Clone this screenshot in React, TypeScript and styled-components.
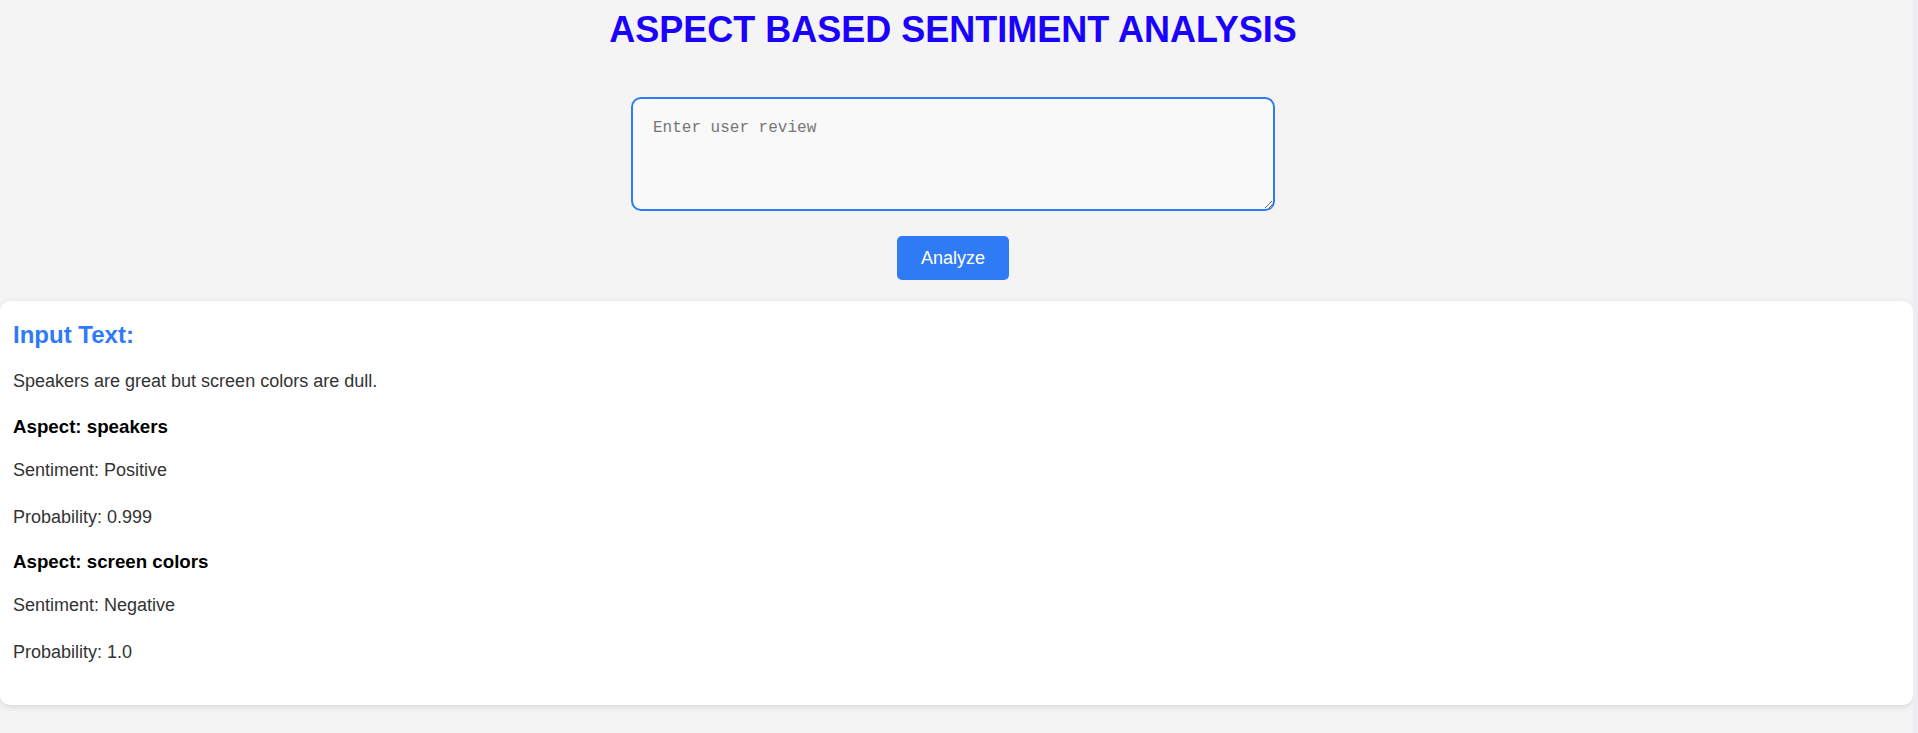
import React from "react";
import styled, { createGlobalStyle } from "styled-components";

const GlobalStyle = createGlobalStyle`
  html, body {
    margin: 0;
    padding: 0;
  }
  body {
    background: #f4f4f4;
    font-family: "Liberation Sans", Arial, Helvetica, sans-serif;
    line-height: 1.6;
    color: #333333;
  }
`;

const Page = styled.div`
  display: grid;
  grid-template-columns: 1fr 5px;
  min-height: 100vh;
`;

const Main = styled.main`
  display: flex;
  flex-direction: column;
  padding-top: 1px;
`;

const ScrollTrack = styled.div`
  background: #ececf3;
`;

const Header = styled.header`
  display: flex;
  flex-direction: column;
  align-items: center;
  padding-right: 7px;
`;

const Title = styled.h1`
  margin: 0;
  font-size: 36px;
  font-weight: 700;
  line-height: 1.6;
  color: #1a00ff;
`;

const Form = styled.form`
  display: flex;
  flex-direction: column;
  align-items: center;
  gap: 25px;
  margin-top: 38px;
`;

const ReviewInput = styled.textarea`
  box-sizing: border-box;
  width: 644px;
  height: 114px;
  padding: 20px 20px 16px;
  border: 2px solid #2f7bf6;
  border-radius: 10px;
  background: #f9f9f9;
  font-family: "Liberation Mono", "Courier New", monospace;
  font-size: 16px;
  line-height: 18px;
  color: #333333;
  outline: none;

  &::placeholder {
    color: #777777;
  }
`;

const AnalyzeButton = styled.button`
  padding: 12px 24px;
  border: none;
  border-radius: 5px;
  background: #2f7bf6;
  color: #ffffff;
  font-family: "Liberation Sans", Arial, Helvetica, sans-serif;
  font-size: 18px;
  line-height: 20px;
  cursor: pointer;
`;

const ResultCard = styled.section`
  margin-top: 21px;
  padding: 20px 13px;
  background: #ffffff;
  border-radius: 10px;
  box-shadow: 0 2px 6px rgba(0, 0, 0, 0.12);
`;

const CardTitle = styled.h2`
  margin: 0 0 18px;
  font-size: 24px;
  line-height: 1.2;
  font-weight: 700;
  color: #2f7bf6;
`;

const Text = styled.p`
  margin: 18px 0;
  font-size: 18px;
  line-height: 1.6;
  color: #333333;
`;

const AspectTitle = styled.h3`
  margin: 19.6px 0 0;
  font-size: 18.72px;
  line-height: normal;
  font-weight: 700;
  color: #000000;
`;

type Aspect = { name: string; sentiment: string; probability: string };

const aspects: Aspect[] = [
  { name: "speakers", sentiment: "Positive", probability: "0.999" },
  { name: "screen colors", sentiment: "Negative", probability: "1.0" },
];

export default function App() {
  return (
    <>
      <GlobalStyle />
      <Page>
        <Main>
          <Header>
            <Title>ASPECT BASED SENTIMENT ANALYSIS</Title>
            <Form onSubmit={(e) => e.preventDefault()}>
              <ReviewInput placeholder="Enter user review" />
              <AnalyzeButton type="submit">Analyze</AnalyzeButton>
            </Form>
          </Header>
          <ResultCard>
            <CardTitle>Input Text:</CardTitle>
            <Text>Speakers are great but screen colors are dull.</Text>
            {aspects.map((a) => (
              <React.Fragment key={a.name}>
                <AspectTitle>Aspect: {a.name}</AspectTitle>
                <Text>Sentiment: {a.sentiment}</Text>
                <Text>Probability: {a.probability}</Text>
              </React.Fragment>
            ))}
          </ResultCard>
        </Main>
        <ScrollTrack />
      </Page>
    </>
  );
}
